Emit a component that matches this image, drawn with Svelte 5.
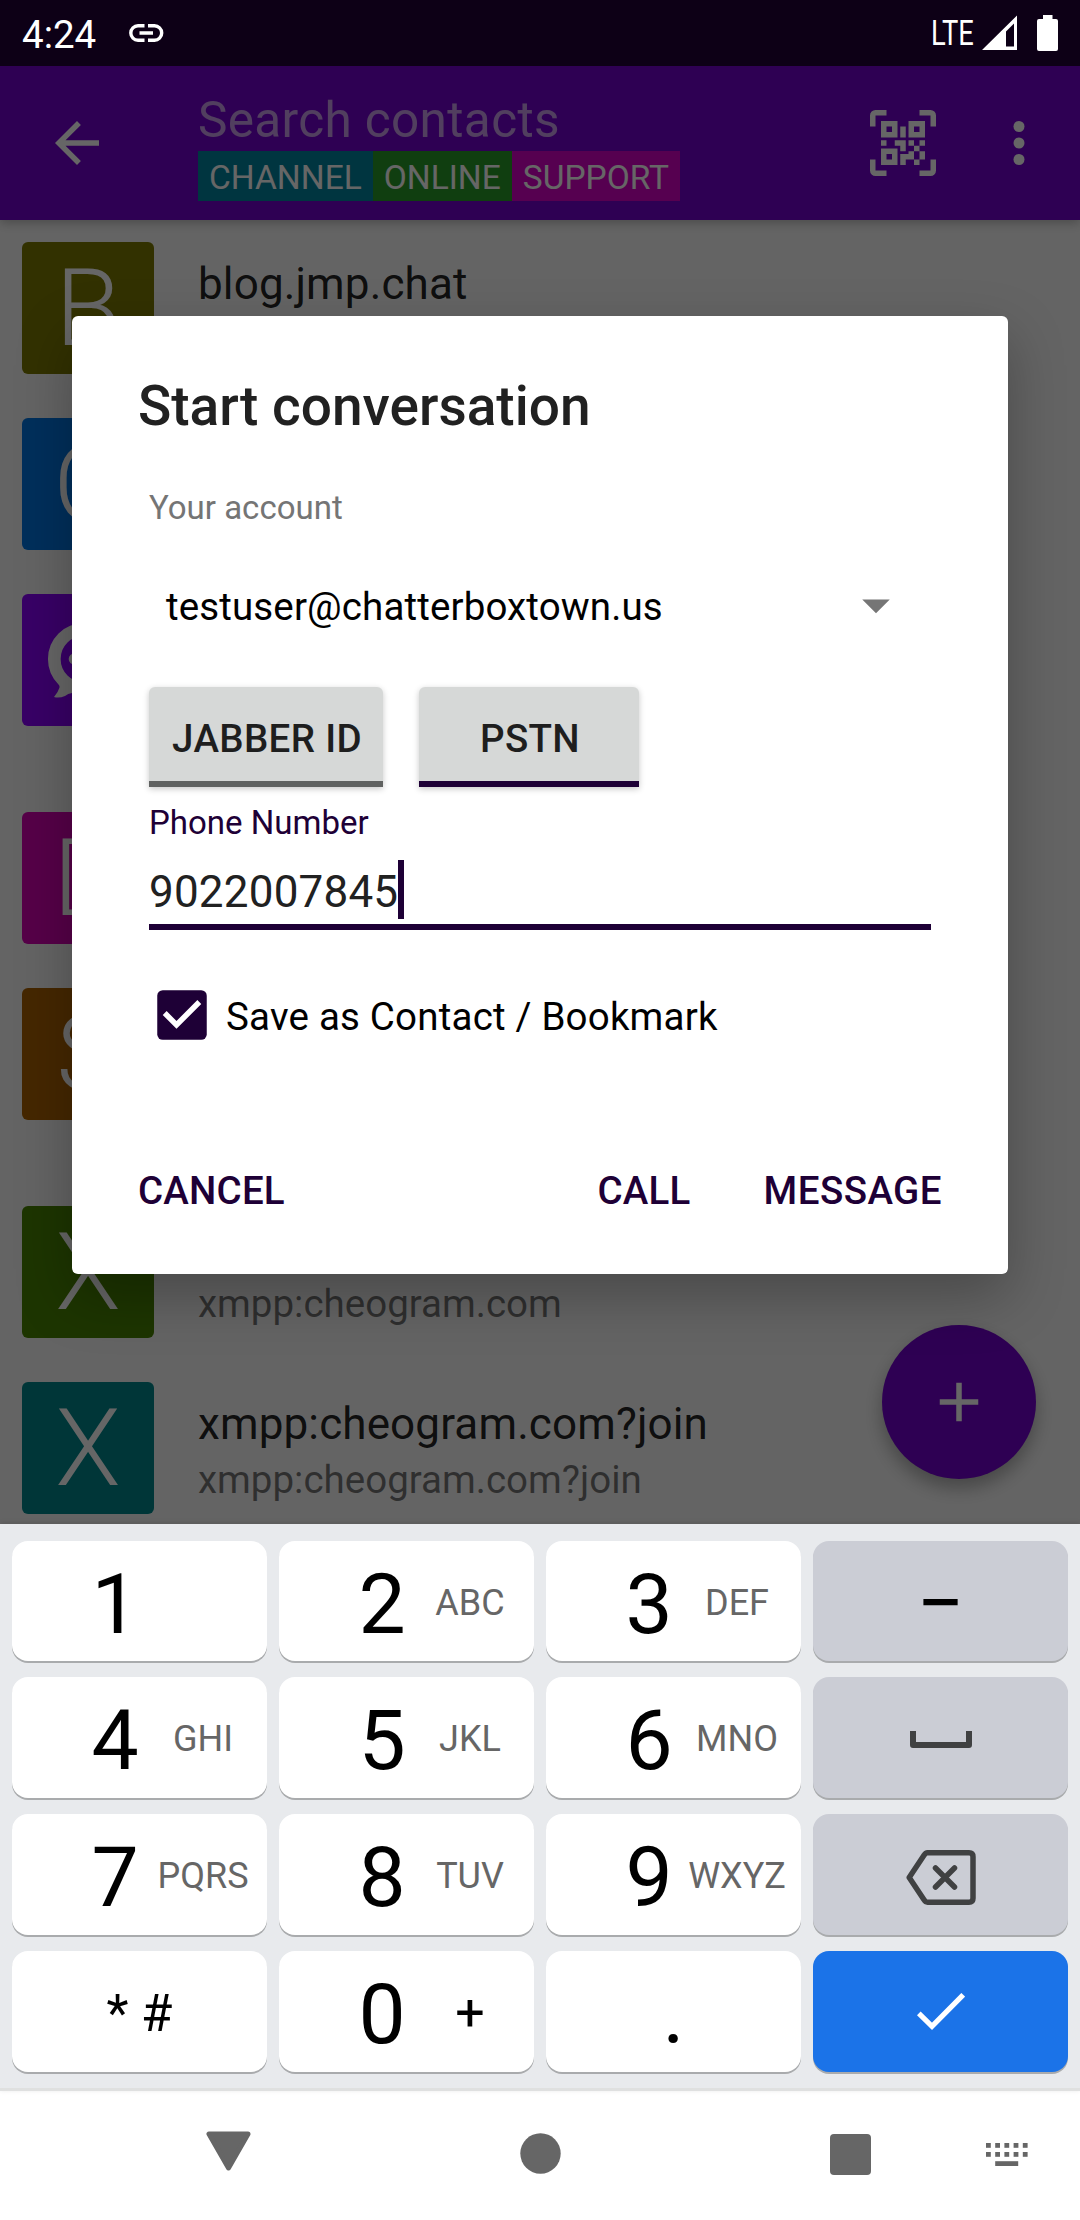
<script>
  const tags = [
    { text: 'CHANNEL', tone: 'teal' },
    { text: 'ONLINE', tone: 'green' },
    { text: 'SUPPORT', tone: 'pink' }
  ];

  const contacts = [
    { letter: 'B', color: '#7e7a00', name: 'blog.jmp.chat', sub: '', tall: false },
    { letter: 'C', color: '#0075e4', name: '', sub: '', tall: false },
    { letter: '', color: '#8c00fe', name: '', sub: '', tall: true },
    { letter: 'D', color: '#d600b4', name: '', sub: '', tall: false },
    { letter: 'S', color: '#ad6200', name: '', sub: '', tall: true },
    { letter: 'X', color: '#4a8400', name: '', sub: 'xmpp:cheogram.com', tall: false },
    { letter: 'X', color: '#00888c', name: 'xmpp:cheogram.com?join', sub: 'xmpp:cheogram.com?join', tall: false }
  ];

  const keys = [
    { digit: '1', letters: '' },
    { digit: '2', letters: 'ABC' },
    { digit: '3', letters: 'DEF' },
    { side: 'minus' },
    { digit: '4', letters: 'GHI' },
    { digit: '5', letters: 'JKL' },
    { digit: '6', letters: 'MNO' },
    { side: 'space' },
    { digit: '7', letters: 'PQRS' },
    { digit: '8', letters: 'TUV' },
    { digit: '9', letters: 'WXYZ' },
    { side: 'backspace' },
    { symbol: '* #' },
    { digit: '0', plus: '+' },
    { point: '.' },
    { side: 'done' }
  ];
</script>

<div class="screen">
  <div class="status">
    <span class="clock">4:24</span>
    <svg class="link" width="36" height="18" viewBox="0 0 36 18">
      <path d="M15.5 1.8H9a7.2 7.2 0 0 0 0 14.4h6.5M19 1.8h6.500a7.200 7.200 0 0 1 0 14.400H19M10.500 9h13.500" fill="none" stroke="#fff" stroke-width="3.400" />
    </svg>
    <span class="lte">LTE</span>
    <svg class="signal" width="36" height="36" viewBox="0 0 36 36">
      <path fill="#fff" fill-rule="evenodd" d="M0 35L35 0.500v34.500zM24 31.500h8V8.500l-8 8z" />
    </svg>
    <svg class="battery" width="21" height="36" viewBox="0 0 21 36">
      <path fill="#fff" d="M6 0h9.500v4H19a2 2 0 0 1 2 2v28a2 2 0 0 1-2 2H2a2 2 0 0 1-2-2V6a2 2 0 0 1 2-2h4z" />
    </svg>
  </div>

  <header class="bar">
    <svg class="icon" viewBox="0 0 24 24"><path d="M20 11H7.830l5.590-5.590L12 4l-8 8 8 8 1.410-1.410L7.830 13H20z" /></svg>
    <div class="heading">
      <div class="search">Search contacts</div>
      <div class="tags">
        {#each tags as tag}
          <span class="tag {tag.tone}">{tag.text}</span>
        {/each}
      </div>
    </div>
    <svg class="icon" viewBox="0 0 24 24"><path d="M4,4H10V10H4V4M20,4V10H14V4H20M14,15H16V13H14V11H16V13H18V11H20V13H18V15H20V18H18V20H16V18H13V20H11V16H14V15M16,15V18H18V15H16M4,20V14H10V20H4M6,6V8H8V6H6M16,6V8H18V6H16M6,16V18H8V16H6M4,11H6V13H4V11M9,11H13V15H11V13H9V11M11,6H13V10H11V6M2,2V6H0V2A2,2 0 0,1 2,0H6V2H2M22,0A2,2 0 0,1 24,2V6H22V2H18V0H22M2,18V22H6V24H2A2,2 0 0,1 0,22V18H2M22,22V18H24V22A2,2 0 0,1 22,24H18V22H22Z" /></svg>
    <svg class="icon more" viewBox="0 0 24 24"><circle cx="12" cy="6" r="2" /><circle cx="12" cy="12" r="2" /><circle cx="12" cy="18" r="2" /></svg>
  </header>

  <main class="list">
    {#each contacts as c}
      <div class="row" class:tall={c.tall}>
        <div class="avatar" style="background: {c.color}">
          {#if c.letter}
            {c.letter}
          {:else}
            <svg width="132" height="132" viewBox="0 0 132 132">
              <circle cx="62" cy="65" r="29.700" fill="none" stroke="#fff" stroke-width="12.700" />
              <path fill="#fff" d="M34 86q4 5 3.500 7.500-1.500 5-5.500 9.500 5 1.500 11-1 3-2.500 7-3L56 94z" />
              <circle cx="52.500" cy="65" r="5.800" fill="#fff" />
            </svg>
          {/if}
        </div>
        <div class="info">
          <div class="name">{c.name}</div>
          <div class="sub">{c.sub}</div>
        </div>
      </div>
    {/each}
    <div class="fab">
      <svg class="icon" viewBox="0 0 24 24"><path d="M19 13h-6v6h-2v-6H5v-2h6V5h2v6h6z" /></svg>
    </div>
  </main>

  <div class="scrim"></div>

  <section class="dialog">
    <h1>Start conversation</h1>
    <div class="label">Your account</div>
    <div class="spinner">
      <span>testuser@chatterboxtown.us</span>
      <svg width="66" height="66" viewBox="0 0 24 24"><path fill="#757575" d="M7 10l5 5 5-5z" /></svg>
    </div>
    <div class="toggles">
      <button class="toggle jabber">JABBER ID</button>
      <button class="toggle pstn">PSTN</button>
    </div>
    <div class="label phone">Phone Number</div>
    <div class="field"><span>9022007845</span><i class="caret"></i></div>
    <div class="check">
      <svg width="66" height="66" viewBox="0 0 24 24">
        <rect x="3" y="3" width="18" height="18" rx="2" fill="#1e0036" />
        <path fill="#fff" d="M10 17l-5-5 1.410-1.410L10 14.170l7.590-7.590L19 8z" />
      </svg>
      <span>Save as Contact / Bookmark</span>
    </div>
    <div class="actions">
      <span class="cancel">CANCEL</span>
      <span>CALL</span>
      <span class="message">MESSAGE</span>
    </div>
  </section>

  <div class="keyboard">
    {#each keys as k}
      <div class="key {k.side ?? ''}" class:side={k.side}>
        {#if k.digit}
          <span class="digit">{k.digit}</span>
          {#if k.plus}<span class="plus">{k.plus}</span>{:else}<span class="letters">{k.letters}</span>{/if}
        {:else if k.symbol}
          <span class="symbol">{k.symbol}</span>
        {:else if k.point}
          <span class="point">{k.point}</span>
        {:else if k.side === 'minus'}
          <span class="dash">−</span>
        {:else if k.side === 'space'}
          <svg class="space-icon" width="62" height="17" viewBox="0 0 62 17"><path d="M3 0v14h56V0" fill="none" stroke="#404142" stroke-width="6" stroke-linejoin="round" /></svg>
        {:else if k.side === 'backspace'}
          <svg class="erase-icon" width="70" height="55" viewBox="0 0 70 55">
            <path d="M21.500 2.800H63q4 0 4 4v41.400q0 4-4 4H21.500q-2 0-3.500-2.500L3.200 27.500 18 5.300q1.500-2.500 3.500-2.500z" fill="none" stroke="#404142" stroke-width="5.500" stroke-linejoin="round" />
            <path d="M29.500 18l19 19m0-19l-19 19" fill="none" stroke="#404142" stroke-width="5.500" stroke-linecap="round" />
          </svg>
        {:else}
          <svg width="48" height="37" viewBox="0 0 48 37"><path d="M1.800 20.300l13.200 13L46.200 1.800" fill="none" stroke="#fff" stroke-width="5.200" /></svg>
        {/if}
      </div>
    {/each}
  </div>

  <nav class="nav">
    <svg class="back" width="45" height="41" viewBox="0 0 45 41"><path d="M3 3h39L22.500 37z" fill="#666" stroke="#666" stroke-width="5" stroke-linejoin="round" /></svg>
    <svg class="home" width="41" height="41" viewBox="0 0 41 41"><circle cx="20.500" cy="20.500" r="20.200" fill="#666" /></svg>
    <svg class="recents" width="41" height="41" viewBox="0 0 41 41"><rect width="41" height="41" rx="4" fill="#666" /></svg>
    <svg class="ime" width="42" height="24" viewBox="0 0 42 24">
      {#each [0, 1, 2, 3, 4] as col}
        <rect x={col * 9.200} y="0" width="4.800" height="4.800" fill="#666" />
        <rect x={col * 9.200} y="9" width="4.800" height="4.800" fill="#666" />
      {/each}
      <rect x="9.200" y="18.200" width="23" height="4.800" fill="#666" />
    </svg>
  </nav>
</div>

<style>
  :global(body) { margin: 0; background: #fff; }
  .screen {
    position: relative;
    display: flex;
    flex-direction: column;
    width: 1080px;
    height: 2220px;
    overflow: hidden;
    background: #fff;
    font-family: Roboto, 'Liberation Sans', sans-serif;
  }
  .screen * { box-sizing: border-box; white-space: nowrap; }
  svg { display: block; flex: none; }

  .status {
    position: relative;
    z-index: 3;
    display: flex;
    align-items: flex-start;
    height: 66px;
    padding-left: 22px;
    background: #0d0016;
    color: #fff;
  }
  .clock { width: 107px; font-size: 38.5px; line-height: 70px; }
  .link { margin-top: 24px; }
  .lte {
    margin-left: 766px;
    width: 51px;
    font-size: 34.6px;
    line-height: 66px;
    transform: scaleX(0.79);
    transform-origin: left;
  }
  .signal { margin-top: 15px; }
  .battery { margin: 15px 0 0 19px; }

  .bar {
    position: relative;
    z-index: 1;
    flex: none;
    display: flex;
    height: 154px;
    padding: 0 28px 0 44px;
    background: #7401cf;
    box-shadow: 0 3px 10px rgba(0, 0, 0, 0.25);
    color: #fff;
  }
  .icon { width: 66px; height: 66px; fill: #fff; }
  .bar > .icon { margin-top: 44px; }
  .bar > .more { margin-left: 50px; }
  .heading { flex: 1; padding: 24px 0 0 88px; }
  .search { font-size: 49.5px; line-height: 61px; letter-spacing: 0.35px; color: rgba(255, 255, 255, 0.62); }
  .tags { display: flex; }
  .tag { height: 50px; padding: 0 11px; font-size: 33.5px; line-height: 53px; }
  .teal { background: #0084a0; }
  .green { background: #289b28; }
  .pink { background: #d700c8; }

  .list { height: 1304px; background: #fafafa; overflow: hidden; flex: none; }
  .row { display: flex; height: 176px; padding: 22px; gap: 44px; }
  .tall { height: 218px; }
  .avatar {
    width: 132px;
    height: 132px;
    flex: none;
    border-radius: 6px;
    color: #fff;
    font-size: 107px;
    font-weight: 300;
    line-height: 134px;
    text-align: center;
  }
  .info { padding-top: 16px; }
  .name { height: 52px; font-size: 44px; line-height: 52px; letter-spacing: 0.13px; color: rgba(0, 0, 0, 0.87); }
  .sub { margin-top: 4px; font-size: 38.5px; line-height: 52px; color: rgba(0, 0, 0, 0.54); }
  .fab {
    position: absolute;
    left: 882px;
    top: 1325px;
    display: flex;
    align-items: center;
    justify-content: center;
    width: 154px;
    height: 154px;
    border-radius: 50%;
    background: #7401cf;
    box-shadow: 0 9px 18px rgba(0, 0, 0, 0.3);
  }

  .scrim { position: absolute; z-index: 2; left: 0; top: 0; width: 1080px; height: 1524px; background: rgba(0, 0, 0, 0.6); }

  .dialog {
    position: absolute;
    z-index: 4;
    left: 72px;
    top: 316px;
    width: 936px;
    height: 958px;
    padding: 58px 66px 0;
    border-radius: 6px;
    background: #fff;
    box-shadow: 0 22px 56px rgba(0, 0, 0, 0.27);
    color: #000;
    font-size: 38.5px;
  }
  h1 { margin: 0; font-size: 55px; font-weight: 500; line-height: 64px; color: #212121; }
  .label { margin: 50px 0 0 11px; font-size: 33px; line-height: 40px; color: #757575; }
  .spinner { display: flex; justify-content: space-between; margin: 45px 33px 0 28px; line-height: 68px; height: 66px; letter-spacing: 0.13px; }
  .spinner svg { margin-top: -1px; }
  .toggles { display: flex; gap: 36px; margin: 48px 0 0 11px; }
  .toggle {
    height: 100px;
    padding: 9px 0 0 2px;
    border: 0;
    border-bottom: 6px solid #606261;
    border-radius: 6px 6px 0 0;
    background: #d6d8d7;
    box-shadow: 0 2px 6px rgba(0, 0, 0, 0.22);
    color: #1e1e1e;
    font: 500 38.5px/85px Roboto, 'Liberation Sans', sans-serif;
    letter-spacing: 0.35px;
  }
  .jabber { width: 234px; }
  .pstn { width: 220px; border-bottom-color: #1e0036; }
  .phone { margin-top: 15px; line-height: 41px; height: 40px; color: #1e0036; }
  .field {
    display: flex;
    width: 782px;
    height: 74px;
    margin: 14px 0 0 11px;
    border-bottom: 6px solid #1e0036;
    color: #212121;
    font-size: 44px;
    line-height: 72px;
  }
  .field span { width: 249px; letter-spacing: 0.2px; }
  .caret { width: 6px; height: 59px; margin-top: 4px; background: #1e0036; }
  .check { display: flex; gap: 11px; margin: 52px 0 0 11px; height: 66px; line-height: 69px; letter-spacing: 0.2px; }
  .actions { display: flex; gap: 73px; margin-top: 113px; color: #1e0036; font-weight: 500; line-height: 60px; letter-spacing: 0.2px; }
  .cancel { margin-right: auto; }
  .message { letter-spacing: 0.45px; }

  .keyboard {
    position: relative;
    z-index: 3;
    flex: none;
    display: grid;
    grid-template-columns: repeat(4, 255px);
    grid-template-rows: 120px 121px 121px 121px;
    gap: 16px 12px;
    height: 567px;
    padding: 17px 12px 0;
    border-bottom: 3px solid #dfe0e0;
    background: #e8eaed;
    box-shadow: 0 -1px 5px rgba(0, 0, 0, 0.12);
  }
  .key { display: flex; border-radius: 16px; background: #fff; box-shadow: 0 2px 0 #a9abad; color: #000; }
  .side { align-items: center; justify-content: center; background: #cbcdd5; }
  .done { background: #1b73e8; }
  .digit { width: 48px; margin-left: 79px; font-size: 84px; line-height: 127px; height: 120px; text-align: center; }
  .letters, .plus { flex: 1; height: 120px; text-align: center; }
  .letters { color: #666; font-size: 36px; line-height: 125px; }
  .plus { font-size: 52px; line-height: 123px; }
  .symbol { width: 255px; height: 120px; font-size: 51px; line-height: 125px; text-align: center; }
  .point { width: 255px; height: 120px; font-size: 84px; line-height: 127px; text-align: center; }
  .dash { height: 120px; font-size: 84px; line-height: 126px; }
  .space-icon { margin-top: 3px; }
  .erase-icon { margin-top: 6px; }

  .nav { display: flex; align-items: flex-start; height: 129px; padding: 40px 0 0 206px; background: #fff; }
  .home { margin: 2px 0 0 268.5px; }
  .recents { margin: 3px 0 0 269.5px; }
  .ime { margin: 12px 0 0 115px; }
</style>
